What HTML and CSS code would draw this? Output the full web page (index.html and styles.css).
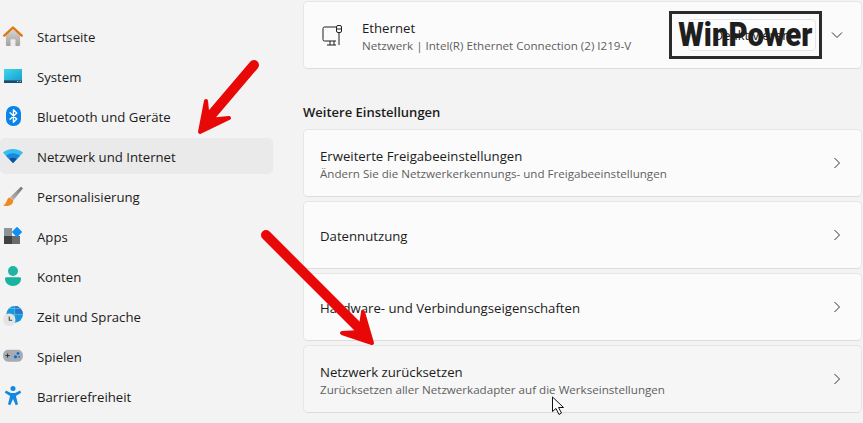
FILE: index.html
```html
<!DOCTYPE html>
<html lang="de">
<head>
  <meta charset="UTF-8">
  <meta name="viewport" content="width=device-width, initial-scale=1.0">
  <title>Netzwerk und Internet</title>
  <link rel="stylesheet" href="styles.css">
</head>
<body>

  <!-- Left navigation -->
  <nav class="sidebar">
    <a class="nav-item">
      <svg class="nav-icon" viewBox="0 0 24 24">
        <defs><linearGradient id="homeWall" x1="0" y1="0" x2="0" y2="1"><stop offset="0" stop-color="#d8d8d8"/><stop offset="1" stop-color="#a3a09c"/></linearGradient></defs>
        <path d="M3.500 10.500 12 3 20.500 10.500V22.500a1.500 1.500 0 0 1-1.500 1.500H5a1.500 1.500 0 0 1-1.500-1.500Z" fill="url(#homeWall)"/>
        <path d="M9 24v-7a1 1 0 0 1 1-1h4a1 1 0 0 1 1 1v7Z" fill="#ececec"/>
        <path d="M1.500 11.500 12 1.800 22.500 11.500" fill="none" stroke="#e0750f" stroke-width="2.800" stroke-linecap="round" stroke-linejoin="round"/>
      </svg>
      <span class="nav-label">Startseite</span>
    </a>
    <a class="nav-item">
      <svg class="nav-icon" viewBox="0 0 24 24">
        <defs><linearGradient id="sysScreen" x1="0" y1="0" x2="1" y2="1"><stop offset="0" stop-color="#3fd6ec"/><stop offset="1" stop-color="#1aa0cf"/></linearGradient></defs>
        <rect x="1.200" y="3.600" width="21.600" height="13.400" fill="url(#sysScreen)"/>
        <rect x="1.200" y="17" width="21.600" height="3.400" fill="#114f78"/>
        <rect x="17" y="18" width="1.200" height="1.200" fill="#cfe8f2"/>
        <rect x="20" y="18" width="1.200" height="1.200" fill="#cfe8f2"/>
      </svg>
      <span class="nav-label">System</span>
    </a>
    <a class="nav-item">
      <svg class="nav-icon" viewBox="0 0 24 24">
        <rect x="3.600" y="0" width="18" height="24" rx="8.500" fill="#0a84ea"/>
        <path d="M8.500 8 16.500 15.500 12.500 19.500V4.500L16.500 8.500 8.500 16" fill="none" stroke="#fff" stroke-width="1.600" stroke-linejoin="round" stroke-linecap="round"/>
      </svg>
      <span class="nav-label">Bluetooth und Geräte</span>
    </a>
    <a class="nav-item active">
      <svg class="nav-icon" viewBox="0 0 24 24">
        <path d="M0 8C6 2 18 2 24 8L12 20.400Z" fill="#35bdf0"/>
        <path d="M3.500 11.800C8.500 7.500 15.500 7.500 20.500 11.800L12 20.400Z" fill="#1a86dc"/>
        <path d="M7.500 15.500C10 13.800 14 13.800 16.500 15.500L12 20.400Z" fill="#0f4f9c"/>
      </svg>
      <span class="nav-label">Netzwerk und Internet</span>
    </a>
    <a class="nav-item">
      <svg class="nav-icon" viewBox="0 0 24 24">
        <defs><linearGradient id="brushHandle" x1="1" y1="0" x2="0" y2="1"><stop offset="0" stop-color="#6d7074"/><stop offset="1" stop-color="#bdbdbd"/></linearGradient></defs>
        <path d="M21.500 .8 24 2.800 12.500 17 8.500 13.500Z" fill="url(#brushHandle)"/>
        <path d="M8 13.800C4.500 14.500 5 19 2.500 21.500L0 23.500C6 24.800 12.500 23 12.300 17Z" fill="#f08a1d"/>
      </svg>
      <span class="nav-label">Personalisierung</span>
    </a>
    <a class="nav-item">
      <svg class="nav-icon" viewBox="0 0 24 24">
        <rect x="1.200" y="2.400" width="9.600" height="9.600" fill="#8f9296"/>
        <rect x="1.200" y="12" width="9.600" height="9.600" fill="#3f4145"/>
        <rect x="10.800" y="12" width="9.600" height="9.600" fill="#696b6f"/>
        <rect x="12.300" y="2.700" width="9" height="9" rx="1" transform="rotate(45 16.800 7.200)" fill="#0f8ff0"/>
      </svg>
      <span class="nav-label">Apps</span>
    </a>
    <a class="nav-item">
      <svg class="nav-icon" viewBox="0 0 24 24">
        <circle cx="12" cy="6" r="6" fill="#1fb5a2"/>
        <path d="M4 13.500h16a1.600 1.600 0 0 1 1.600 1.600C21.600 21 17 24 12 24S2.400 21 2.400 15.100A1.600 1.600 0 0 1 4 13.500Z" fill="#17b39e"/>
      </svg>
      <span class="nav-label">Konten</span>
    </a>
    <a class="nav-item">
      <svg class="nav-icon" viewBox="0 0 24 24">
        <circle cx="14" cy="10" r="10" fill="#1b96d8"/>
        <path d="M14 0a10 10 0 0 1 10 10H14Z" fill="#2a74c9"/>
        <path d="M7 3H21M4 10H24M14 0V20" stroke="#5cc8ee" stroke-width=".8" fill="none"/>
        <circle cx="7.500" cy="16.500" r="7.500" fill="#e4e4e4"/>
        <path d="M7.500 12.500V17H11" fill="none" stroke="#444" stroke-width="1.300"/>
      </svg>
      <span class="nav-label">Zeit und Sprache</span>
    </a>
    <a class="nav-item">
      <svg class="nav-icon" viewBox="0 0 24 24">
        <path d="M6 4.500H18C21.500 4.500 24 7.500 24 11.500 24 15.500 21.500 19 18 19H6C2.500 19 0 15.500 0 11.500 0 7.500 2.500 4.500 6 4.500Z" fill="#a7abb2"/>
        <path d="M3 11.500H8M5.500 9V14" stroke="#333" stroke-width="1.200"/>
        <circle cx="18" cy="9" r="1.700" fill="#0f6fd0"/>
        <circle cx="15" cy="13" r="2" fill="#0f6fd0"/>
        <circle cx="19.500" cy="13" r="1.100" fill="#0f6fd0"/>
      </svg>
      <span class="nav-label">Spielen</span>
    </a>
    <a class="nav-item">
      <svg class="nav-icon" viewBox="0 0 24 24">
        <circle cx="12" cy="3" r="3" fill="#1488e0"/>
        <path d="M3.500 5.500 9.500 8.500H14.500L20.500 5.500 21.800 8 15.500 12 18 22 15.300 23 12 15.500 8.700 23 6 22 8.500 12 2.200 8Z" fill="#1488e0"/>
      </svg>
      <span class="nav-label">Barrierefreiheit</span>
    </a>
  </nav>

  <!-- Settings list -->
  <main class="content">
    <div class="card card-ethernet">
      <svg class="card-icon" viewBox="0 0 20 22">
        <path d="M14 3H2.500A1.500 1.500 0 0 0 1 4.500V15.500A1.500 1.500 0 0 0 2.500 17H14M5 21H14M8 17V21M12 17V21" fill="none" stroke="#1f1f1f" stroke-width="1"/>
        <rect x="14.500" y="1.500" width="5" height="7" rx="1.500" fill="none" stroke="#1f1f1f"/>
        <path d="M14.500 5H19.500M17 8.500V21" fill="none" stroke="#1f1f1f"/>
      </svg>
      <div class="card-text">
        <div class="card-title">Ethernet</div>
        <div class="card-sub">Netzwerk | Intel(R) Ethernet Connection (2) I219-V</div>
      </div>
      <div class="eth-button">Deaktivieren</div>
      <svg class="chevron" viewBox="0 0 12 12"><path d="M1 3.500 6 8.500 11 3.500" fill="none" stroke="#333" stroke-width="1"/></svg>
    </div>

    <h2 class="section-title">Weitere Einstellungen</h2>

    <div class="card-list">
      <div class="card">
        <div class="card-text">
          <div class="card-title">Erweiterte Freigabeeinstellungen</div>
          <div class="card-sub">Ändern Sie die Netzwerkerkennungs- und Freigabeeinstellungen</div>
        </div>
        <svg class="chevron" viewBox="0 0 12 12"><path d="M3.500 1 8.500 6 3.500 11" fill="none" stroke="#333" stroke-width="1"/></svg>
      </div>
      <div class="card">
        <div class="card-text"><div class="card-title">Datennutzung</div></div>
        <svg class="chevron" viewBox="0 0 12 12"><path d="M3.500 1 8.500 6 3.500 11" fill="none" stroke="#333" stroke-width="1"/></svg>
      </div>
      <div class="card">
        <div class="card-text"><div class="card-title">Hardware- und Verbindungseigenschaften</div></div>
        <svg class="chevron" viewBox="0 0 12 12"><path d="M3.500 1 8.500 6 3.500 11" fill="none" stroke="#333" stroke-width="1"/></svg>
      </div>
      <div class="card card-hover">
        <div class="card-text">
          <div class="card-title">Netzwerk zurücksetzen</div>
          <div class="card-sub">Zurücksetzen aller Netzwerkadapter auf die Werkseinstellungen</div>
        </div>
        <svg class="chevron" viewBox="0 0 12 12"><path d="M3.500 1 8.500 6 3.500 11" fill="none" stroke="#333" stroke-width="1"/></svg>
      </div>
    </div>
  </main>

  <!-- Things pasted over the screenshot -->
  <div class="logo"><span class="logo-text">WinPower</span></div>

  <svg class="overlay" viewBox="0 0 863 423">
    <path d="M254 65 208 119" fill="none" stroke="#e80808" stroke-width="10" stroke-linecap="round"/>
    <path d="M206 101 200 132 229 118 208 120Z" fill="#e80808" stroke="#e80808" stroke-width="4" stroke-linejoin="round"/>
    <path d="M266 235 364 333" fill="none" stroke="#e80808" stroke-width="10" stroke-linecap="round"/>
    <path d="M363 312 372 343 342 333 360 332Z" fill="#e80808" stroke="#e80808" stroke-width="4" stroke-linejoin="round"/>
    <path d="M552.500 397V411.500L556 408.500 559 414.500 561.500 413 558.500 407.500 563.500 407.500Z" fill="#fff" stroke="#111" stroke-width="1"/>
  </svg>

</body>
</html>
```

FILE: styles.css
```css
body {
  margin: 0;
  width: 863px;
  height: 423px;
  overflow: hidden;
  display: flex;
  background: #f3f3f3;
  color: #1b1b1b;
  font-family: "Open Sans", "Noto Sans", sans-serif;
  font-size: 13.2px;
}
/* Left navigation */
.sidebar {
  width: 273px;
  padding-top: 18px;
  display: flex;
  flex-direction: column;
  gap: 4px;
}
.nav-item {
  height: 36px;
  display: flex;
  align-items: center;
  gap: 14px;
  padding-left: 3px;
  border-radius: 5px;
}
.nav-item.active {
  background: #eaeaea;
}
.nav-icon {
  width: 20px;
  height: 20px;
  flex-shrink: 0;
}
.nav-label {
  margin-top: 2px;
}
/* Right column */
.content {
  width: 559px;
  margin-left: 30px;
  padding-top: 1px;
}
.card {
  height: 68px;
  box-sizing: border-box;
  display: flex;
  align-items: center;
  padding: 0 18px 0 16px;
  background: #fbfbfb;
  border: 1px solid #e6e6e6;
  border-bottom-color: #dcdcdc;
  border-radius: 5px;
}
.card-hover {
  background: #f6f6f6;
}
.card-ethernet {
  padding-left: 18px;
}
.card-icon {
  width: 20px;
  height: 22px;
  margin-right: 20px;
  flex-shrink: 0;
}
.card-text {
  flex: 1;
  padding-top: 2px;
}
.card-title {
  line-height: 19px;
}
.card-sub {
  font-size: 11.6px;
  line-height: 16px;
  color: #5f5f5f;
}
.eth-button {
  width: 128px;
  height: 32px;
  margin-right: 15px;
  box-sizing: border-box;
  text-align: center;
  line-height: 30px;
  font-size: 13px;
  background: #fdfdfd;
  border: 1px solid #e5e5e5;
  border-radius: 4px;
}
.chevron {
  width: 12px;
  height: 12px;
  flex-shrink: 0;
}
.section-title {
  margin: 0;
  padding-top: 34px;
  height: 26px;
  line-height: 19px;
  font-size: 13px;
  font-weight: 600;
}
.card-list {
  display: flex;
  flex-direction: column;
  gap: 4px;
}
/* Logo stamp over the Ethernet row */
.logo {
  position: absolute;
  left: 669px;
  top: 11px;
  width: 153px;
  height: 48px;
  box-sizing: border-box;
  border: 3px solid #2b2b2b;
  display: flex;
  justify-content: center;
  font-family: "Roboto", sans-serif;
  font-weight: 900;
  font-size: 33px;
  line-height: 42px;
  color: #1e1e1e;
}
.logo-text {
  display: inline-block;
  transform: scaleX(0.89);
}
.overlay {
  position: absolute;
  left: 0;
  top: 0;
  width: 863px;
  height: 423px;
  pointer-events: none;
}
```
